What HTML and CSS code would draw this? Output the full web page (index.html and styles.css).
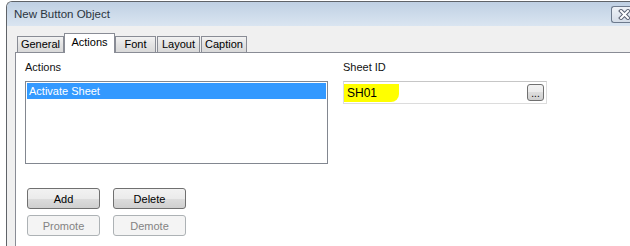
FILE: index.html
```html
<!DOCTYPE html>
<html lang="en">
<head>
    <meta charset="UTF-8">
    <title>New Button Object</title>
    <link rel="stylesheet" href="styles.css">
</head>
<body>
    <div class="window">
        <div class="titlebar">
            <span class="title">New Button Object</span>
            <div class="close-btn">
                <svg width="12" height="11" viewBox="0 0 12 11">
                    <path d="M3 2 L10 9 M10 2 L3 9" stroke="#5b6272" stroke-width="4" stroke-linecap="square"/>
                    <path d="M3 2 L10 9 M10 2 L3 9" stroke="#fff" stroke-width="2" stroke-linecap="square"/>
                </svg>
            </div>
        </div>

        <div class="client">
            <div class="tabs">
                <div class="tab tab-general">General</div>
                <div class="tab tab-actions selected">Actions</div>
                <div class="tab tab-font">Font</div>
                <div class="tab tab-layout">Layout</div>
                <div class="tab tab-caption">Caption</div>
            </div>

            <div class="panel">
                <div class="columns">
                    <div class="col-left">
                        <div class="field-label">Actions</div>
                        <div class="listbox">
                            <div class="list-item active">Activate Sheet</div>
                        </div>

                        <div class="button-grid">
                            <button class="btn">Add</button>
                            <button class="btn">Delete</button>
                            <button class="btn" disabled>Promote</button>
                            <button class="btn" disabled>Demote</button>
                        </div>
                    </div>

                    <div class="col-right">
                        <div class="field-label">Sheet ID</div>
                        <div class="text-input">
                            <span class="marker">SH01</span>
                            <button class="browse-btn">...</button>
                        </div>
                    </div>
                </div>
            </div>
        </div>
    </div>
</body>
</html>
```

FILE: styles.css
```css
body {
    margin: 0;
    background: #fff;
    font-family: "Liberation Sans", Arial, sans-serif;
    font-size: 11px;
    color: #000;
    overflow: hidden;
    height: 246px;
}

/* the dialog runs off the right and bottom of the shot */
.window {
    box-sizing: border-box;
    width: 624px;
    height: 245px;
    margin: 1px 0 0 6px;
    border: 1px solid #5f6368;
    border-right: none;
    border-bottom: none;
    border-radius: 6px 0 0 0;
    background: #f0f0f0;
}

.titlebar {
    display: flex;
    align-items: flex-start;
    height: 24px;
    background: linear-gradient(#bfd0e3, #dae5f1);
    border-radius: 5px 0 0 0;
}

.title {
    font-size: 11.5px;
    color: #2b3540;
    margin: 6px 0 0 7px;
}

.close-btn {
    box-sizing: border-box;
    margin: 4px 0 0 auto;
    width: 19px;
    height: 17px;
    border: 1px solid #6d7a8d;
    border-right: none;
    border-radius: 3px 0 0 3px;
    background: linear-gradient(#eef2f7, #d5dde8);
    display: flex;
    align-items: center;
    padding-left: 6px;
}

.client {
    padding: 7px 0 0 8px;
}

.tabs {
    display: flex;
    align-items: flex-end;
    height: 19px;
    padding-left: 2px;
}

.tab {
    box-sizing: border-box;
    height: 16px;
    line-height: 15px;
    text-align: center;
    border: 1px solid #898c95;
    border-bottom: none;
    background: linear-gradient(#f2f2f2, #e3e3e3 50%, #d9d9d9);
}

.tab-general { width: 47px; }
.tab-actions { width: 51px; }
.tab-font { width: 41px; }
.tab-layout { width: 43px; margin-left: 1px; }
.tab-caption { width: 46px; margin-left: 1px; }

.tab.selected {
    height: 20px;
    line-height: 17px;
    margin-bottom: -1px;
    background: #fff;
    position: relative;
    z-index: 1;
}

.panel {
    box-sizing: border-box;
    height: 194px;
    background: #fff;
    border: 1px solid #898c95;
    border-right: none;
    border-bottom: none;
    padding: 8px 0 0 9px;
}

.columns {
    display: flex;
    gap: 15px;
}

.col-left {
    width: 303px;
}

.col-right {
    width: 204px;
}

.field-label {
    line-height: 13px;
    margin-bottom: 7px;
    color: #111;
}

.listbox {
    box-sizing: border-box;
    height: 83px;
    border: 1px solid #828790;
    padding: 1px;
}

.list-item {
    height: 16px;
    line-height: 16px;
    padding-left: 2px;
}

.list-item.active {
    background: #3399ff;
    color: #fff;
}

.button-grid {
    display: grid;
    grid-template-columns: 73px 73px;
    grid-auto-rows: 21px;
    column-gap: 13px;
    row-gap: 6px;
    margin: 24px 0 0 2px;
}

.btn {
    font-family: "Liberation Sans", Arial, sans-serif;
    font-size: 11px;
    color: #000;
    padding: 0;
    border: 1px solid #707070;
    border-radius: 3px;
    background: linear-gradient(#f2f2f2, #ebebeb 50%, #dddddd 50%, #cfcfcf);
}

.btn:disabled {
    color: #838383;
    border-color: #adb2b5;
    background: #f4f4f4;
}

.text-input {
    box-sizing: border-box;
    height: 23px;
    display: flex;
    align-items: center;
    border: 1px solid #dcdcdc;
    border-top-color: #c6c6c6;
    padding: 0 2px 0 0;
}

.marker {
    background: #ffff00;
    font-size: 12px;
    line-height: 18px;
    padding: 0 22px 0 3px;
    margin-top: 1px;
    border-radius: 0 0 8px 0;
}

.browse-btn {
    margin-left: auto;
    width: 17px;
    height: 17px;
    padding: 0;
    border: 1px solid #707070;
    border-radius: 3px;
    background: linear-gradient(#f2f2f2, #ebebeb 50%, #dddddd 50%, #cfcfcf);
    font-family: "Liberation Sans", Arial, sans-serif;
    font-size: 10px;
    line-height: 18px;
    color: #000;
}
```
